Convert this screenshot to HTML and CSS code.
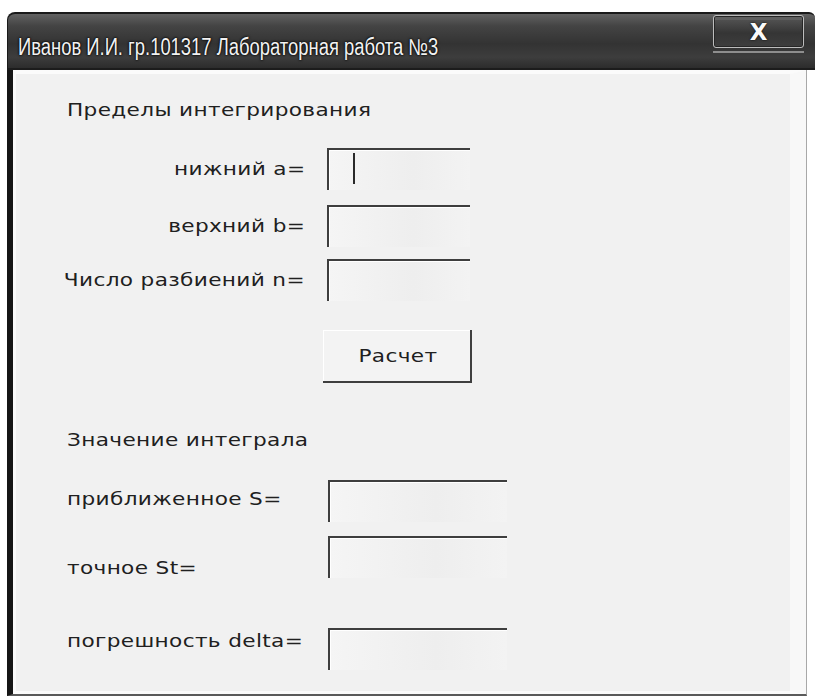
FILE: index.html
```html
<!DOCTYPE html>
<html lang="ru">
<head>
<meta charset="utf-8">
<title>Лабораторная работа №3</title>
<link rel="stylesheet" href="styles.css">
</head>
<body>
<div class="window">
  <div class="titlebar">
    <span class="title">Иванов И.И. гр.101317 Лабораторная работа №3</span>
    <div class="close-wrap"><button class="close" type="button">X</button></div>
  </div>
  <div class="frame">
    <div class="client">
      <div class="heading h1"><span class="wide">Пределы интегрирования</span></div>

      <div class="row r-a">
        <label class="lbl right"><span class="wide">нижний а=</span></label>
        <div class="box short"><span class="caret"></span></div>
      </div>
      <div class="row r-b">
        <label class="lbl right"><span class="wide">верхний b=</span></label>
        <div class="box short"></div>
      </div>
      <div class="row r-n">
        <label class="lbl right"><span class="wide">Число разбиений n=</span></label>
        <div class="box short"></div>
      </div>

      <div class="btn-row">
        <button class="btn" type="button"><span class="wide">Расчет</span></button>
      </div>

      <div class="heading h2"><span class="wide">Значение интеграла</span></div>

      <div class="row r-s">
        <label class="lbl left"><span class="wide">приближенное S=</span></label>
        <div class="box long"></div>
      </div>
      <div class="row r-st">
        <label class="lbl left low"><span class="wide">точное St=</span></label>
        <div class="box long"></div>
      </div>
      <div class="row r-d">
        <label class="lbl left mid"><span class="wide">погрешность delta=</span></label>
        <div class="box long"></div>
      </div>
    </div>
  </div>
</div>
</body>
</html>
```

FILE: styles.css
```css
html, body {
  margin: 0;
  padding: 0;
  background: #ffffff;
}

body {
  width: 815px;
  height: 698px;
  overflow: hidden;
  font-family: "DejaVu Sans", "Liberation Sans", sans-serif;
  color: #202020;
}

/* window frame */
.window {
  margin: 12px 0 0 7px;
  width: 808px;
  display: flex;
  flex-direction: column;
}

.titlebar {
  height: 58px;
  box-sizing: border-box;
  border-top: 2px solid #1a1a1a;
  border-left: 1px solid #1a1a1a;
  border-bottom: 2px solid #1c1c1c;
  border-radius: 8px 6px 0 0;
  background: linear-gradient(#626262 0%, #444444 22%, #333333 55%, #3d3d3d 80%, #2c2c2c 100%);
  display: flex;
  align-items: flex-start;
  flex: none;
}

.title {
  display: inline-block;
  margin: 20px 0 0 10px;
  font-family: "Liberation Sans", sans-serif;
  font-size: 23px;
  line-height: 26px;
  color: #f2f2f2;
  text-shadow: 0 0 2px #000, 0 0 3px #000;
  white-space: nowrap;
  transform: scaleX(0.8);
  transform-origin: left center;
}

.close-wrap {
  margin-left: auto;
  margin-right: 11px;
  margin-top: 1px;
  padding-bottom: 3px;
  border-bottom: 2px solid #8e8e8e;
}

.close {
  display: block;
  width: 91px;
  height: 33px;
  box-sizing: border-box;
  border: 1px solid #bdbdbd;
  border-radius: 3px;
  box-shadow: inset 0 0 0 1px #262626, inset 0 3px 0 1px #606060;
  background: linear-gradient(#585858, #353535 55%, #3e3e3e);
  color: #fafafa;
  font-family: "DejaVu Sans", sans-serif;
  font-weight: bold;
  font-size: 23px;
  line-height: 22px;
  padding: 0;
  text-shadow: 0 0 2px #000;
}

/* body of the window under the caption */
.frame {
  width: 800px;
  height: 626px;
  box-sizing: border-box;
  border-left: 6px solid #161616;
  border-right: 1px solid #a8a8a8;
  border-bottom: 2px solid #5a5a5a;
  display: flex;
}

.client {
  flex: 1;
  background: #f1f1f1;
  border-top: 4px solid #fbfbfb;
  border-left: 3px solid #fafafa;
  border-right: 16px solid #f8f8f8;
  border-bottom: 3px solid #fbfbfb;
  padding: 25px 0 0 51px;
  display: flex;
  flex-direction: column;
}

.heading,
.lbl {
  font-size: 18px;
  line-height: 22px;
  letter-spacing: 0.3px;
  white-space: nowrap;
}

/* the dialog font is a broad one: stretch the glyphs sideways */
.wide {
  display: inline-block;
  transform: scaleX(1.2);
  transform-origin: left center;
}

.right .wide { transform-origin: right center; }
.btn .wide { transform-origin: center center; }

.row {
  display: flex;
  align-items: flex-start;
}

.lbl.right {
  width: 238px;
  text-align: right;
  margin-top: 10px;
}

.lbl.left {
  width: 261px;
  margin-top: 8px;
}

.lbl.low { margin-top: 21px; }
.lbl.mid { margin-top: 2px; }

.box {
  height: 42px;
  box-sizing: border-box;
  border-top: 2px solid #3e3e3e;
  border-left: 2px solid #3e3e3e;
  box-shadow: inset 1px 1px 0 #ffffff;
  background: linear-gradient(90deg, #f5f5f5, #eeeeee 60%, #f3f3f3);
  position: relative;
}

.box.short {
  width: 143px;
  margin-left: 22px;
}

.box.long {
  width: 179px;
}

.caret {
  position: absolute;
  left: 24px;
  top: 3px;
  width: 2px;
  height: 31px;
  background: #2a2a2a;
}

.h1 { margin-bottom: 27px; }
.r-b { margin-top: 15px; }
.r-n { margin-top: 12px; }

.btn-row {
  margin-top: 29px;
  padding-left: 256px;
}

.btn {
  width: 149px;
  height: 53px;
  box-sizing: border-box;
  border: none;
  border-right: 2px solid #3f3f3f;
  border-bottom: 2px solid #3f3f3f;
  box-shadow: inset 1px 1px 0 #ffffff;
  background: #f3f3f3;
  font-family: "DejaVu Sans", sans-serif;
  font-size: 18px;
  letter-spacing: 0.3px;
  color: #202020;
  padding: 0 0 0 2px;
}

.h2 { margin-top: 46px; margin-bottom: 29px; }
.r-st { margin-top: 14px; }
.r-d { margin-top: 49px; }
```
